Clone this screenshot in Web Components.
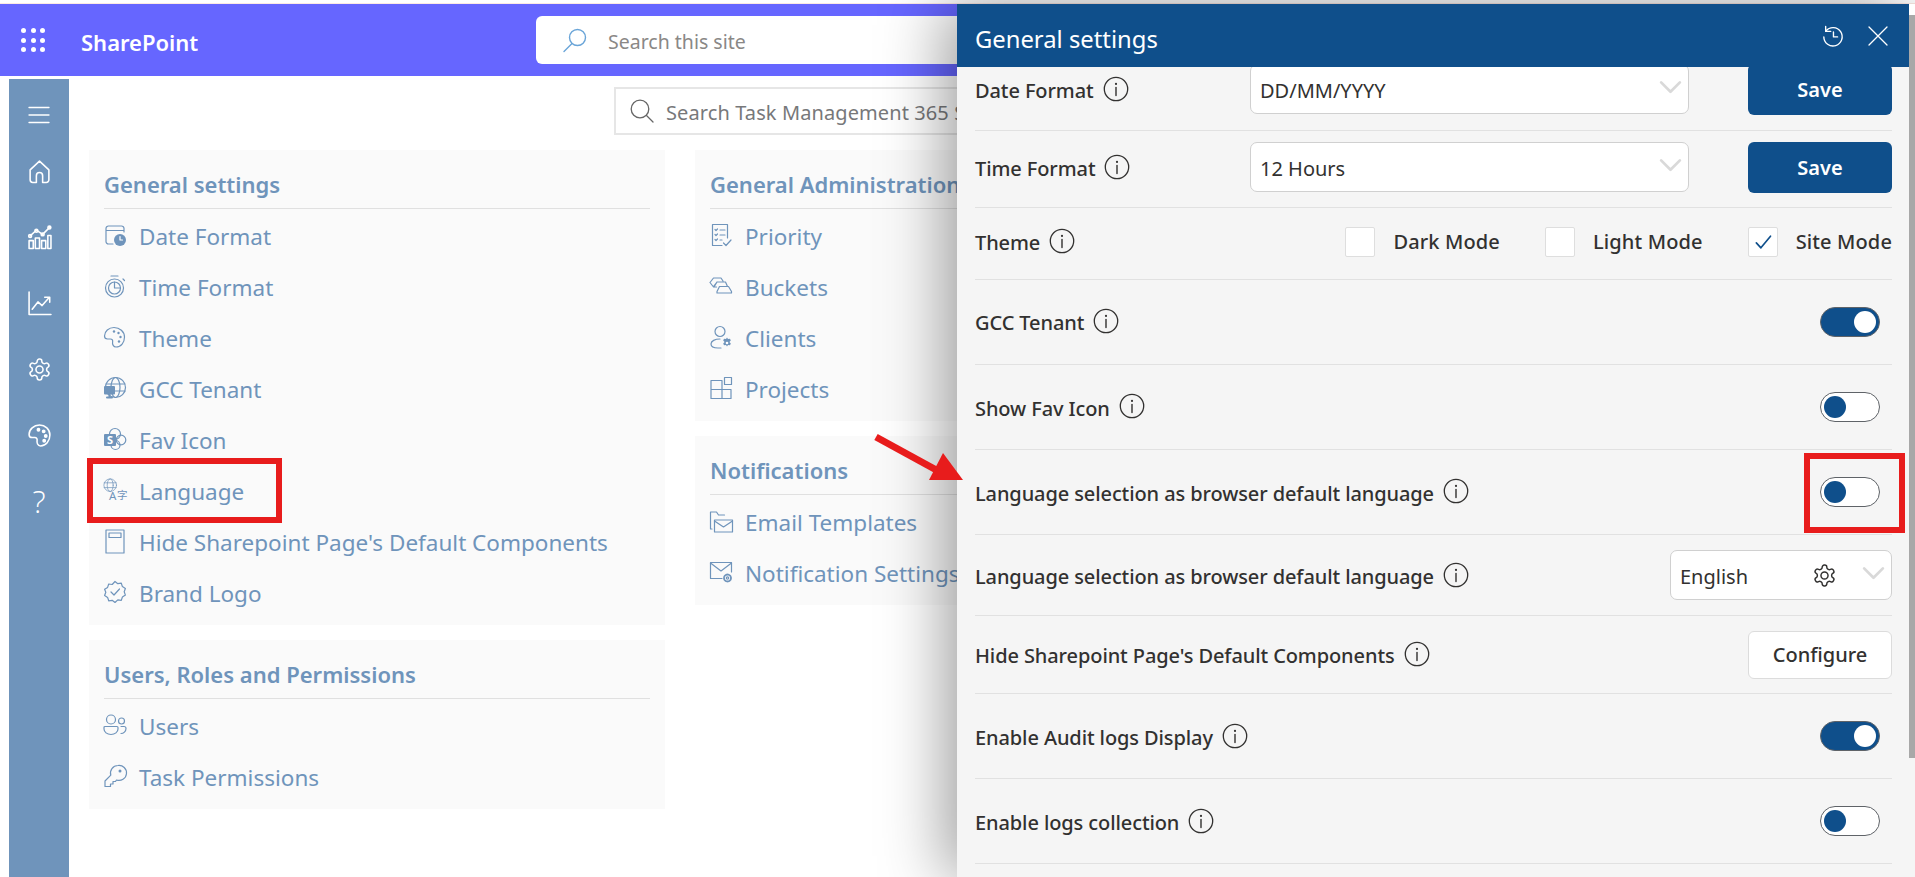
<!DOCTYPE html>
<html lang="en">
<head>
<meta charset="utf-8">
<title>General settings</title>
<style>
  html, body { margin: 0; height: 100%; overflow: hidden; background: #fff; }
  body { font-family: "Noto Sans", "Open Sans", sans-serif; }
</style>
</head>
<body>
<sp-shell>
  <sp-suite-bar slot="top" name="SharePoint" placeholder="Search this site"></sp-suite-bar>
  <sp-rail slot="rail"></sp-rail>
  <sp-search placeholder="Search Task Management 365 Settings"></sp-search>
  <div class="columns" style="display:flex;gap:30px;align-items:flex-start">
    <div style="display:flex;flex-direction:column;gap:15px">
      <sp-card heading="General settings">
        <sp-link icon="date">Date Format</sp-link>
        <sp-link icon="time">Time Format</sp-link>
        <sp-link icon="theme">Theme</sp-link>
        <sp-link icon="gcc">GCC Tenant</sp-link>
        <sp-link icon="fav">Fav Icon</sp-link>
        <sp-link icon="lang">Language</sp-link>
        <sp-link icon="page">Hide Sharepoint Page's Default Components</sp-link>
        <sp-link icon="badge">Brand Logo</sp-link>
      </sp-card>
      <sp-card heading="Users, Roles and Permissions">
        <sp-link icon="users">Users</sp-link>
        <sp-link icon="key">Task Permissions</sp-link>
      </sp-card>
    </div>
    <div style="display:flex;flex-direction:column;gap:15px">
      <sp-card heading="General Administration">
        <sp-link icon="priority">Priority</sp-link>
        <sp-link icon="buckets">Buckets</sp-link>
        <sp-link icon="clients">Clients</sp-link>
        <sp-link icon="projects">Projects</sp-link>
      </sp-card>
      <sp-card heading="Notifications">
        <sp-link icon="mailtpl">Email Templates</sp-link>
        <sp-link icon="mailgear">Notification Settings</sp-link>
      </sp-card>
    </div>
  </div>
</sp-shell>

<gs-panel heading="General settings">
  <gs-row label="Date Format" h="79" pad="4" dy="1.5">
    <gs-select value="DD/MM/YYYY" wide></gs-select>
    <gs-button primary>Save</gs-button>
  </gs-row>
  <gs-row label="Time Format" h="77" pad="4" dy="1.5">
    <gs-select value="12 Hours" wide></gs-select>
    <gs-button primary>Save</gs-button>
  </gs-row>
  <gs-row label="Theme" h="72" pad="4" dy="1">
    <gs-check>Dark Mode</gs-check>
    <gs-check>Light Mode</gs-check>
    <gs-check checked>Site Mode</gs-check>
  </gs-row>
  <gs-row label="GCC Tenant" h="85" dy="0.5"><gs-toggle on></gs-toggle></gs-row>
  <gs-row label="Show Fav Icon" h="85" dy="1"><gs-toggle></gs-toggle></gs-row>
  <gs-row label="Language selection as browser default language" h="85" dy="1"><gs-toggle></gs-toggle></gs-row>
  <gs-row label="Language selection as browser default language" h="81" dy="1.5"><gs-select value="English" gear></gs-select></gs-row>
  <gs-row label="Hide Sharepoint Page's Default Components" h="78" dy="1"><gs-button>Configure</gs-button></gs-row>
  <gs-row label="Enable Audit logs Display" h="85" dy="1.5"><gs-toggle on></gs-toggle></gs-row>
  <gs-row label="Enable logs collection" h="85" dy="1.5"><gs-toggle></gs-toggle></gs-row>
</gs-panel>

<red-box style="left:87px;top:458px;width:195px;height:65px"></red-box>
<red-box style="left:1804px;top:453px;width:101px;height:80px"></red-box>
<red-arrow></red-arrow>

<script>
const ICONS = {
  menu: '<path d="M2 4.5h20M2 12h20M2 19.5h20"/>',
  home: '<path d="M3 10.5 12 2l9 8.5V20a2.5 2.5 0 0 1-2.5 2.5H15V16a3 3 0 0 0-6 0v6.5H5.5A2.5 2.5 0 0 1 3 20z"/>',
  bars: '<path d="M2 15h4v7.5H2zM8 12.5h4v10H8zM14 15h4v7.5h-4zM20 10h3v12.5h-3z"/><path d="M3 10.5 9 5l6 4 7-7"/><circle cx="3" cy="10.5" r="1.4"/><circle cx="9" cy="5.5" r="1.4"/><circle cx="15" cy="9" r="1.4"/><circle cx="21.5" cy="2.5" r="1.4"/>',
  line: '<path d="M2 1v21.5h21"/><path d="m5 17.5 5.5-7 4 3.5 7-8M17 6h4.8v4.8"/>',
  gear: '<path d="M12.22 2h-.44a2 2 0 0 0-2 2v.18a2 2 0 0 1-1 1.73l-.43.25a2 2 0 0 1-2 0l-.15-.08a2 2 0 0 0-2.73.73l-.22.38a2 2 0 0 0 .73 2.73l.15.1a2 2 0 0 1 1 1.72v.51a2 2 0 0 1-1 1.74l-.15.09a2 2 0 0 0-.73 2.73l.22.38a2 2 0 0 0 2.73.73l.15-.08a2 2 0 0 1 2 0l.43.25a2 2 0 0 1 1 1.73V20a2 2 0 0 0 2 2h.44a2 2 0 0 0 2-2v-.18a2 2 0 0 1 1-1.73l.43-.25a2 2 0 0 1 2 0l.15.08a2 2 0 0 0 2.73-.73l.22-.39a2 2 0 0 0-.73-2.73l-.15-.08a2 2 0 0 1-1-1.74v-.5a2 2 0 0 1 1-1.74l.15-.09a2 2 0 0 0 .73-2.73l-.22-.38a2 2 0 0 0-2.73-.73l-.15.08a2 2 0 0 1-2 0l-.43-.25a2 2 0 0 1-1-1.73V4a2 2 0 0 0-2-2z"/><circle cx="12" cy="12" r="3.4"/>',
  palette: '<path d="M12 2C6.5 2 2 6 2 11c0 2 1.3 3 3 3h2.5c1.7 0 2.5 1.2 2.2 2.8-.4 2 .4 5.2 3.3 5.2 5 0 9-4.7 9-10.5C22 6 17.5 2 12 2z"/><circle cx="11" cy="6.5" r="1.1" fill="currentColor"/><circle cx="16" cy="8" r="1.1" fill="currentColor"/><circle cx="18" cy="12.5" r="1.1" fill="currentColor"/><circle cx="16.5" cy="17" r="1.1" fill="currentColor"/>',
  date: '<path d="M21 9V5.5A2.5 2.5 0 0 0 18.5 3h-13A2.5 2.5 0 0 0 3 5.5v13A2.5 2.5 0 0 0 5.5 21H10M3 7.5h18"/><circle cx="17" cy="17" r="6" fill="currentColor" stroke="none"/><path d="M17 13.5V17h2.5" stroke="#fff"/>',
  time: '<circle cx="11.5" cy="14" r="9"/><circle cx="11.5" cy="14" r="6"/><path d="M11.5 8v6h6M8 2h7M20 5l1.5 1.5"/>',
  theme: '<path d="M11 2.5C5.8 2.5 1.5 6.5 1.5 11c0 2 1.2 3 3 3h2.8c2 0 2.7 1.3 2.3 3-.5 2.5.9 5 3.4 5 5 0 8.500-4.500 8.500-10 0-5.300-4.800-9.500-10.500-9.500z"/><g fill="currentColor" stroke="none"><circle cx="11" cy="6.5" r="1.2"/><circle cx="15.5" cy="8" r="1.2"/><circle cx="17.5" cy="12" r="1.2"/><circle cx="16" cy="16.5" r="1.2"/></g>',
  gcc: '<circle cx="12.5" cy="11.5" r="10"/><ellipse cx="12.5" cy="11.5" rx="4.5" ry="10"/><path d="M3 8h19M11 15h11"/><rect x="1" y="10" width="11" height="8.5" rx="1" fill="currentColor" stroke="none"/><path d="M4 21.5h5M6.5 18v3" stroke-width="2"/>',
  fav: '<circle cx="12" cy="7" r="5.5"/><circle cx="18" cy="13" r="4.8"/><circle cx="12.5" cy="18" r="4.5"/><rect x="1" y="7" width="12" height="12" rx="1" fill="currentColor" stroke="none"/><text x="7" y="16.8" text-anchor="middle" font-size="11" font-weight="700" fill="#fff" stroke="none" font-family="Noto Sans">S</text>',
  lang: '<g transform="translate(0 0) scale(.6)"><circle cx="12" cy="12" r="10.5"/><ellipse cx="12" cy="12" rx="5" ry="10.5"/><path d="M2 8h20M2 16h20"/></g><text x="6" y="21.500" font-size="11.500" fill="currentColor" stroke="none" font-family="Noto Sans">A</text><text x="14" y="21" font-size="10.500" fill="currentColor" stroke="none" font-family="Noto Sans CJK SC">字</text>',
  page: '<rect x="3" y="1" width="18" height="23"/><rect x="6" y="4" width="12" height="4.5"/>',
  badge: '<path d="m12 1.5 2.800 2.200 3.500-.5 1.100 3.400 3 1.900-1.200 3.300 1.200 3.300-3 1.900-1.100 3.400-3.500-.5L12 22.500l-2.800-2.200-3.500.5-1.100-3.400-3-1.900 1.200-3.300L1.600 9.300l3-1.900 1.100-3.400 3.500.5z"/><path d="m8 12 3 3 5.500-6"/>',
  users: '<circle cx="8" cy="6.5" r="4.5"/><circle cx="18.5" cy="8" r="3"/><path d="M2 13.5h12a1 1 0 0 1 1 1v1.5c0 3-3 5.500-7 5.500s-7-2.500-7-5.500v-1.500a1 1 0 0 1 1-1zM18 13.500h3a2 2 0 0 1 2 2c0 3-2.500 5-5 5"/>',
  key: '<path d="M15 1.5a7.5 7.5 0 0 0-7.200 9.700L2 17v5.500h5.500V20H10v-2.500h2.500l1-1.500A7.500 7.500 0 1 0 15 1.500z"/><circle cx="17" cy="7" r="1.5" fill="currentColor" stroke="none"/>',
  priority: '<path d="M18.5 15V1.5h-15v21H13"/><path d="M6 6.5l1 1 1.500-1.500M11 7h5M6 11.500l1 1 1.500-1.500M11 12h5M6 16.500l1 1 1.500-1.500M11 17h2M14.500 20l2.500 2.500 5-5.500"/>',
  buckets: '<path d="M1 8.5 4.5 4H12l2 3M4.5 12.5 8 8h8.5l2 4.5M7.5 13H4.5L1 8.5M8 8l-3 5M8 17.5l2.5-5h9l3 5V19H8z"/>',
  clients: '<circle cx="11" cy="6.5" r="5"/><path d="M11 14c-5 0-9 2-9 5s3 4 7 4h3"/><path d="M18 12.5l1 1.600 2-.4.8 1.900-1.400 1.400 1.400 1.400-.8 1.900-2-.4-1 1.600-1-1.600-2 .4-.8-1.900 1.400-1.400-1.400-1.400.8-1.900 2 .4z" fill="currentColor" stroke="none"/><circle cx="18" cy="18" r="1.3" fill="#fff" stroke="none"/>',
  projects: '<path d="M2 4.5h11v18H2zM2 13.5h20v9h-9"/><rect x="15.5" y="1.5" width="7" height="7"/>',
  mailtpl: '<path d="M3 20H1.5V3h6l2 3h6"/><rect x="5.5" y="11" width="18" height="12"/><path d="m5.5 12 9 6 9-6"/>',
  mailgear: '<path d="M13 18.5H1.5v-16h21V12"/><path d="m1.5 3 10.500 8 10.500-8"/><circle cx="18.5" cy="18" r="3.5" stroke-width="1.8" stroke-dasharray="2 .9"/><circle cx="18.5" cy="18" r="1.2"/>',
  info: '<circle cx="12" cy="12" r="10.8"/><path d="M12 10.5V18" stroke-width="1.3"/><circle cx="12" cy="7.3" r="1" fill="currentColor" stroke="none"/>',
  history: '<path d="M4.3 6.5A10 10 0 1 1 2 13"/><path d="M4 1.5V7h5.500M12.500 7.500V13H17"/>',
  close: '<path d="m3 3 18 18M21 3 3 21"/>',
  check: '<path d="m4 13 5.500 6L21 5"/>',
  chevron: '<path d="m3 8 9 9 9-9"/>',
  searchR: '<circle cx="14.5" cy="9.5" r="8"/><path d="M9 15.5 1 23.5"/>',
  searchL: '<circle cx="10" cy="10" r="8.8"/><path d="m16.5 16.5 6.500 6.500"/>'
};

class UiIcon extends HTMLElement {
  connectedCallback() {
    if (this.shadowRoot) return;
    this.attachShadow({ mode: 'open' });
    const size = this.getAttribute('size') || 24;
    const sw = this.getAttribute('sw') || 1.4;
    this.shadowRoot.innerHTML = `
      <style>
        :host { display: inline-flex; flex: none; }
        svg { display: block; overflow: visible; }
      </style>
      <svg width="${size}" height="${size}" viewBox="0 0 24 24" fill="none" stroke="currentColor" stroke-width="${sw}" stroke-linecap="round" stroke-linejoin="round">${ICONS[this.getAttribute('name')] || ''}</svg>`;
  }
}
customElements.define('ui-icon', UiIcon);

class SpShell extends HTMLElement {
  constructor() {
    super();
    this.attachShadow({ mode: 'open' });
    this.shadowRoot.innerHTML = `
      <style>
        :host { display: block; height: 100vh; }
        .strip { height: 4px; box-sizing: border-box; border-top: 2px solid #fff; border-bottom: 1px solid #fce9e4; }
        .below { display: flex; height: calc(100vh - 76px); padding-top: 3px; box-sizing: border-box; }
        .content { flex: 1; padding-left: 20px; min-width: 0; }
      </style>
      <div class="strip"></div>
      <slot name="top"></slot>
      <div class="below">
        <slot name="rail"></slot>
        <div class="content"><slot></slot></div>
      </div>`;
  }
}
customElements.define('sp-shell', SpShell);

class SpSuiteBar extends HTMLElement {
  constructor() {
    super();
    this.attachShadow({ mode: 'open' });
  }
  connectedCallback() {
    const dots = Array.from({ length: 9 }, () => '<i></i>').join('');
    this.shadowRoot.innerHTML = `
      <style>
        :host { display: flex; align-items: center; height: 72px; background: #6666ff; color: #fff; }
        .waffle { display: grid; grid-template-columns: repeat(3, 5px); gap: 4.5px; margin-left: 21px; }
        .waffle i { width: 5px; height: 5px; border-radius: 50%; background: #fff; }
        .name { margin-left: 36px; width: 455px; font-size: 22px; font-weight: 600; padding-top: 3px; }
        .box { display: flex; align-items: center; width: 640px; height: 48px; background: #fff; border-radius: 6px; color: #6aa5d8; padding-left: 27px; box-sizing: border-box; }
        .box span { margin-left: 21px; font-size: 19.5px; color: #8a8886; padding-top: 2px; }
      </style>
      <div class="waffle">${dots}</div>
      <div class="name">${this.getAttribute('name')}</div>
      <div class="box"><ui-icon name="searchR" size="24"></ui-icon><span>${this.getAttribute('placeholder')}</span></div>`;
  }
}
customElements.define('sp-suite-bar', SpSuiteBar);

class SpRail extends HTMLElement {
  constructor() {
    super();
    this.attachShadow({ mode: 'open' });
    const names = ['home', 'bars', 'line', 'gear', 'palette'];
    this.shadowRoot.innerHTML = `
      <style>
        :host { display: flex; flex-direction: column; align-items: center; width: 60px; margin-left: 9px; padding-top: 13px; box-sizing: border-box; background: #6f94bb; color: #fff; flex: none; }
        .it { height: 66px; display: flex; align-items: center; justify-content: center; }
        .it.first { height: 46px; }
        .q { font-size: 31px; font-weight: 300; line-height: 1; font-family: "Open Sans", sans-serif; }
      </style>
      <div class="it first"><ui-icon name="menu" size="24" sw="1.3"></ui-icon></div>
      ${names.map(n => `<div class="it"><ui-icon name="${n}" size="25" sw="1.5"></ui-icon></div>`).join('')}
      <div class="it q">?</div>`;
  }
}
customElements.define('sp-rail', SpRail);

class SpSearch extends HTMLElement {
  constructor() {
    super();
    this.attachShadow({ mode: 'open' });
  }
  connectedCallback() {
    this.shadowRoot.innerHTML = `
      <style>
        :host { display: flex; align-items: center; width: 700px; height: 48px; margin: 8px 0 15px 525px; padding-left: 14px; box-sizing: border-box; border: 2px solid #e6e6e6; color: #666; }
        span { margin-left: 12px; font-size: 20px; color: #77787a; white-space: nowrap; padding-top: 2px; letter-spacing: .1px; }
      </style>
      <ui-icon name="searchL" size="24" sw="1.3"></ui-icon>
      <span>${this.getAttribute('placeholder')}</span>`;
  }
}
customElements.define('sp-search', SpSearch);

class SpCard extends HTMLElement {
  constructor() {
    super();
    this.attachShadow({ mode: 'open' });
  }
  connectedCallback() {
    this.shadowRoot.innerHTML = `
      <style>
        :host { display: block; width: 576px; box-sizing: border-box; padding: 0 15px 5px; background: #fafafa; color: #6f94bb; }
        h3 { margin: 0 0 3px; height: 59px; box-sizing: border-box; padding-top: 16px; border-bottom: 1.5px solid #e0e0e0; font-size: 22px; line-height: 36px; font-weight: 600; }
      </style>
      <h3>${this.getAttribute('heading')}</h3>
      <slot></slot>`;
  }
}
customElements.define('sp-card', SpCard);

class SpLink extends HTMLElement {
  constructor() {
    super();
    this.attachShadow({ mode: 'open' });
  }
  connectedCallback() {
    this.shadowRoot.innerHTML = `
      <style>
        :host { display: flex; align-items: center; height: 51px; box-sizing: border-box; padding-bottom: 3px; gap: 12px; font-size: 22.5px; color: #6f94bb; white-space: nowrap; }
        ui-icon { margin-left: -1px; transform: translateY(-1px); }
      </style>
      <ui-icon name="${this.getAttribute('icon')}" size="24" sw="1.2"></ui-icon>
      <slot></slot>`;
  }
}
customElements.define('sp-link', SpLink);

class GsPanel extends HTMLElement {
  constructor() {
    super();
    this.attachShadow({ mode: 'open' });
  }
  connectedCallback() {
    this.shadowRoot.innerHTML = `
      <style>
        :host { position: absolute; top: 4px; right: 0; bottom: 0; width: 958px; display: flex; background: #f5f5f5; box-shadow: -12px 0 60px rgba(0,0,0,.38); z-index: 2; font-size: 20px; color: #323130; }
        .main { flex: 1; min-width: 0; display: flex; flex-direction: column; }
        header { flex: none; height: 63px; background: #0f4f8b; color: #fff; display: flex; align-items: center; padding: 0 17px 0 18px; position: relative; z-index: 1; }
        h2 { flex: 1; margin: 0; font-size: 23.8px; font-weight: 400; padding-top: 7px; }
        .tools { display: flex; gap: 22px; align-items: center; margin-right: 2px; }
        .body { flex: 1; min-height: 0; overflow: hidden; padding: 0 17px 0 18px; }
        .inner { margin-top: -15px; }
        .bar { flex: none; width: 6px; background: #f5f5f5; }
        .bar .top { height: 11px; background: #fff; }
        .bar .thumb { height: 743px; background: #a8a8a8; }
      </style>
      <div class="main">
        <header>
          <h2>${this.getAttribute('heading')}</h2>
          <div class="tools"><ui-icon name="history" size="22" sw="1.5"></ui-icon><ui-icon name="close" size="24" sw="1.3"></ui-icon></div>
        </header>
        <div class="body"><div class="inner"><slot></slot></div></div>
      </div>
      <div class="bar"><div class="top"></div><div class="thumb"></div></div>`;
  }
}
customElements.define('gs-panel', GsPanel);

class GsRow extends HTMLElement {
  constructor() {
    super();
    this.attachShadow({ mode: 'open' });
  }
  connectedCallback() {
    const dy = Number(this.getAttribute('dy') || 0);
    this.shadowRoot.innerHTML = `
      <style>
        :host { display: flex; align-items: center; justify-content: space-between; box-sizing: border-box; height: ${this.getAttribute('h')}px; padding-bottom: ${this.getAttribute('pad') || 0}px; border-bottom: 1.5px solid #e1e1e1; }
        .label { display: flex; align-items: center; gap: 9px; margin-top: ${dy * 2}px; font-weight: 500; white-space: nowrap; letter-spacing: -.1px; }
        ui-icon { transform: translateY(-2px); }
        .controls { display: flex; align-items: center; }
      </style>
      <div class="label"><span>${this.getAttribute('label')}</span><ui-icon name="info" size="26" sw="1.2"></ui-icon></div>
      <div class="controls"><slot></slot></div>`;
  }
}
customElements.define('gs-row', GsRow);

class GsSelect extends HTMLElement {
  constructor() {
    super();
    this.attachShadow({ mode: 'open' });
  }
  connectedCallback() {
    const wide = this.hasAttribute('wide');
    const gear = this.hasAttribute('gear');
    this.shadowRoot.innerHTML = `
      <style>
        :host { display: flex; align-items: center; width: ${wide ? 439 : 222}px; height: 50px; margin-right: ${wide ? 59 : 0}px; box-sizing: border-box; padding: 0 5px 0 9px; background: #fff; border: 1.5px solid #d0d0d0; border-radius: 7px; }
        span { flex: 1; padding-top: 2px; }
        .gear { margin-right: 24px; color: #323130; }
        .chev { color: #d9d9d9; transform: translateY(-3px); }
      </style>
      <span>${this.getAttribute('value')}</span>
      ${gear ? '<ui-icon class="gear" name="gear" size="25" sw="1.4"></ui-icon>' : ''}
      <ui-icon class="chev" name="chevron" size="25" sw="2.6"></ui-icon>`;
  }
}
customElements.define('gs-select', GsSelect);

class GsButton extends HTMLElement {
  constructor() {
    super();
    this.attachShadow({ mode: 'open' });
  }
  connectedCallback() {
    const primary = this.hasAttribute('primary');
    this.shadowRoot.innerHTML = `
      <style>
        :host { display: flex; align-items: center; justify-content: center; width: 144px; height: ${primary ? 51 : 48}px; box-sizing: border-box; border-radius: 6px; font-weight: ${primary ? 600 : 500}; background: ${primary ? '#0f4f8b' : '#fff'}; color: ${primary ? '#fff' : '#323130'}; border: ${primary ? 'none' : '1.5px solid #dcdcdc'}; }
      </style>
      <slot></slot>`;
  }
}
customElements.define('gs-button', GsButton);

class GsCheck extends HTMLElement {
  constructor() {
    super();
    this.attachShadow({ mode: 'open' });
  }
  connectedCallback() {
    this.shadowRoot.innerHTML = `
      <style>
        :host { display: flex; align-items: center; gap: 18px; margin-left: 45px; font-weight: 500; letter-spacing: .13px; }
        .box { width: 30px; height: 30px; box-sizing: border-box; background: #fff; border: 1px solid #dedede; border-radius: 2px; display: flex; align-items: center; justify-content: center; color: #0f4f8b; }
      </style>
      <div class="box">${this.hasAttribute('checked') ? '<ui-icon name="check" size="20" sw="2"></ui-icon>' : ''}</div>
      <slot></slot>`;
  }
}
customElements.define('gs-check', GsCheck);

class GsToggle extends HTMLElement {
  constructor() {
    super();
    this.attachShadow({ mode: 'open' });
  }
  connectedCallback() {
    const on = this.hasAttribute('on');
    this.shadowRoot.innerHTML = `
      <style>
        :host { display: flex; align-items: center; justify-content: ${on ? 'flex-end' : 'flex-start'}; width: 60px; height: 30px; margin-right: 12px; padding: 0 3px; box-sizing: border-box; border-radius: 15px; border: 1.5px solid #5f6368; background: ${on ? '#0f4f8b' : '#fff'}; }
        i { width: 22px; height: 22px; border-radius: 50%; background: ${on ? '#fff' : '#0f4f8b'}; }
      </style>
      <i></i>`;
  }
}
customElements.define('gs-toggle', GsToggle);

class RedBox extends HTMLElement {
  constructor() {
    super();
    this.attachShadow({ mode: 'open' });
    this.shadowRoot.innerHTML = `
      <style>
        :host { position: absolute; box-sizing: border-box; border: 6px solid #e81c1c; z-index: 3; }
      </style>`;
  }
}
customElements.define('red-box', RedBox);

class RedArrow extends HTMLElement {
  constructor() {
    super();
    this.attachShadow({ mode: 'open' });
    this.shadowRoot.innerHTML = `
      <style>
        :host { position: absolute; left: 870px; top: 430px; z-index: 3; }
        svg { display: block; }
      </style>
      <svg width="100" height="56" viewBox="0 0 100 56">
        <path d="M6 7 70 42" stroke="#e81c1c" stroke-width="7"/>
        <path d="M73 23 93 50H59z" fill="#e81c1c"/>
      </svg>`;
  }
}
customElements.define('red-arrow', RedArrow);
</script>
</body>
</html>
